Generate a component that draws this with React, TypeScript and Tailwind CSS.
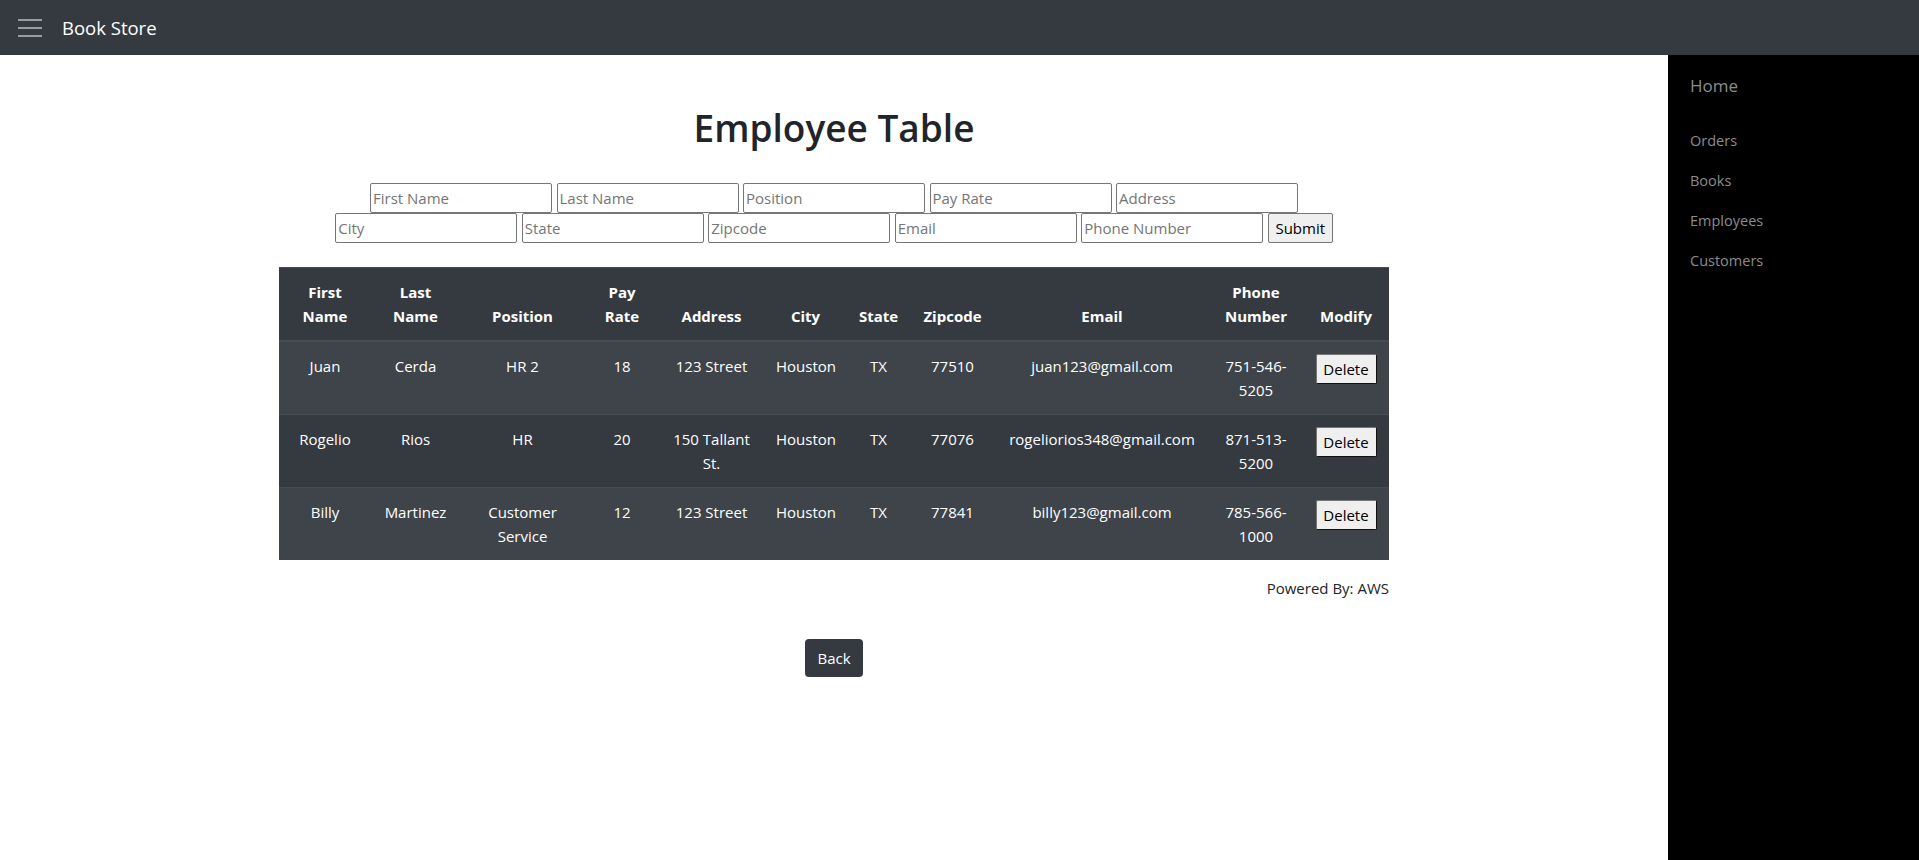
import React from "react";

const employees = [
  { first: "Juan", last: "Cerda", position: "HR 2", pay: "18", address: "123 Street", city: "Houston", state: "TX", zip: "77510", email: "juan123@gmail.com", phone: "751-546-5205" },
  { first: "Rogelio", last: "Rios", position: "HR", pay: "20", address: "150 Tallant St.", city: "Houston", state: "TX", zip: "77076", email: "rogeliorios348@gmail.com", phone: "871-513-5200" },
  { first: "Billy", last: "Martinez", position: "Customer Service", pay: "12", address: "123 Street", city: "Houston", state: "TX", zip: "77841", email: "billy123@gmail.com", phone: "785-566-1000" },
];

const headers = ["First Name", "Last Name", "Position", "Pay Rate", "Address", "City", "State", "Zipcode", "Email", "Phone Number", "Modify"];
const widths = [92, 89, 125, 74, 105, 83, 63, 85, 214, 94, 86];

function Field({ ph }: { ph: string }) {
  return (
    <input
      placeholder={ph}
      className="w-[182px] h-[30px] border border-[#767676] rounded-[2px] px-[2px] text-[15px] leading-6 text-[#212529] placeholder:text-[#757575] bg-white outline-none"
    />
  );
}

export default function App() {
  return (
    <div className="min-h-screen h-[860px] flex flex-col font-['Open_Sans',sans-serif] text-[#212529] bg-white">
      <nav className="h-[55px] shrink-0 bg-[#343a40] flex items-center pl-[14px]">
        <svg width="30" height="30" viewBox="0 0 30 30" className="shrink-0">
          <path d="M4 7h24M4 15h24M4 23h24" stroke="rgba(255,255,255,0.5)" strokeWidth="2" strokeLinecap="butt" fill="none" />
        </svg>
        <span className="ml-[18px] text-[18.5px] leading-[30px] text-white">Book Store</span>
      </nav>
      <div className="flex flex-1">
        <main className="flex-1 flex flex-col items-center">
          <h1 className="mt-[49px] text-[37px] leading-[48px] font-[550] text-[#212529]">Employee Table</h1>
          <div className="mt-[31px] flex flex-col items-center">
            <div className="flex gap-[4.5px]">
              <Field ph="First Name" />
              <Field ph="Last Name" />
              <Field ph="Position" />
              <Field ph="Pay Rate" />
              <Field ph="Address" />
            </div>
            <div className="flex gap-[4.5px]">
              <Field ph="City" />
              <Field ph="State" />
              <Field ph="Zipcode" />
              <Field ph="Email" />
              <Field ph="Phone Number" />
              <button className="w-[65px] h-[30px] border border-[#767676] rounded-[2px] bg-[#efefef] text-[15px] leading-6 text-black">Submit</button>
            </div>
          </div>
          <div className="mt-[24px] w-[1110px]">
            <table className="w-[1110px] table-fixed border-collapse bg-[#343a40] text-white text-[15px] leading-6 text-center">
              <colgroup>
                {widths.map((w, i) => (
                  <col key={i} style={{ width: w }} />
                ))}
              </colgroup>
              <thead>
                <tr>
                  {headers.map((h) => (
                    <th key={h} className="p-3 align-bottom font-bold border-t border-b-2 border-[#454d55]">
                      {h}
                    </th>
                  ))}
                </tr>
              </thead>
              <tbody>
                {employees.map((e, i) => (
                  <tr key={e.email} className={i % 2 === 0 ? "bg-[#3e444a]" : "bg-[#343a40]"}>
                    {[e.first, e.last, e.position, e.pay, e.address, e.city, e.state, e.zip, e.email, e.phone].map((v, j) => (
                      <td key={j} className="p-3 align-top border-t border-[#454d55]">
                        {v}
                      </td>
                    ))}
                    <td className="p-3 align-top border-t border-[#454d55]">
                      <button className="w-[61px] h-[30px] border border-[#767676] border-r-[#111] border-b-[#111] rounded-[2px] bg-[#efefef] text-[15px] leading-6 text-black">Delete</button>
                    </td>
                  </tr>
                ))}
              </tbody>
            </table>
            <div className="mt-4 text-right text-[15px] leading-6 text-[#212529]">Powered By: AWS</div>
          </div>
          <button className="mt-[39px] w-[58px] h-[38px] rounded-[4px] bg-[#343a40] text-white text-[15px] leading-6">Back</button>
        </main>
        <aside className="w-[251px] shrink-0 bg-black pl-[22px] pt-[18px]">
          <div className="text-[17px] leading-[26px] text-[#8c8c8c]">Home</div>
          <div className="mt-[30px] flex flex-col gap-[16px] text-[14.5px] leading-6 text-[#8c8c8c]">
            <div>Orders</div>
            <div>Books</div>
            <div>Employees</div>
            <div>Customers</div>
          </div>
        </aside>
      </div>
    </div>
  );
}
